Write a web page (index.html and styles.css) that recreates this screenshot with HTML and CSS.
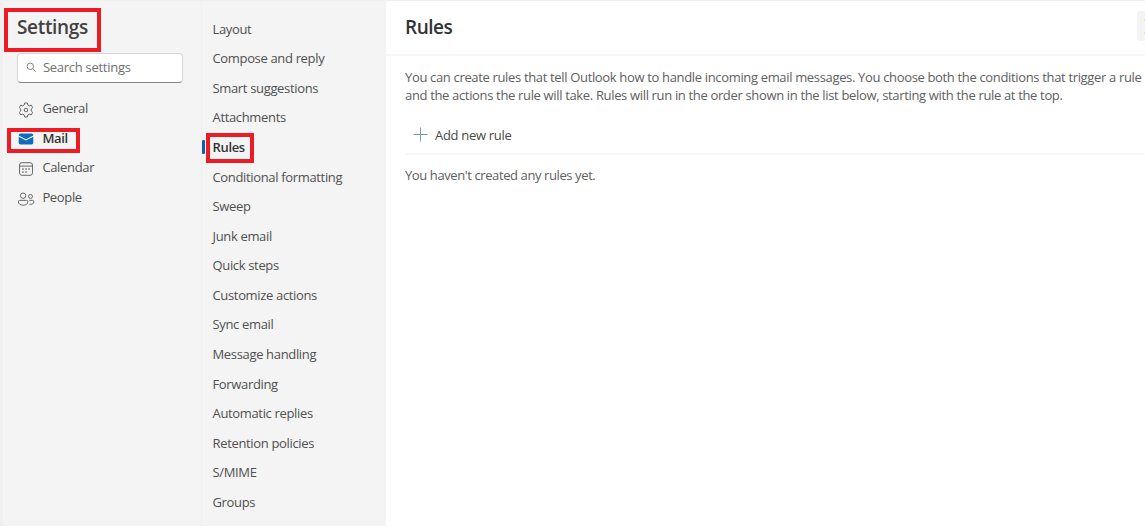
FILE: index.html
```html
<!DOCTYPE html>
<html lang="en">
<head>
<meta charset="utf-8">
<title>Settings</title>
<link rel="stylesheet" href="styles.css">
</head>
<body>
<div class="app">
  <aside class="sidebar">
    <h1 class="title marked">Settings</h1>
    <div class="search">
      <svg class="search-icon" viewBox="0 0 12 12"><circle cx="4.7" cy="4.7" r="3.5"/><path d="M7.3 7.3 10.7 10.7"/></svg>
      <span>Search settings</span>
    </div>
    <nav class="categories">
      <a class="category"><svg class="icon gear" viewBox="0 0 20 20"><path d="M8.500 2.200h3l.5 2.300 1.600.9 2.200-.8 1.700 2.800-1.700 1.500v2.200l1.700 1.500-1.700 2.800-2.200-.8-1.600.9-.5 2.300h-3L8 15.500l-1.600-.9-2.200.8-1.700-2.800 1.700-1.500V8.900L2.500 7.400l1.700-2.800 2.200.8L8 4.500z"/><circle cx="10" cy="10" r="2"/></svg><span>General</span></a>
      <a class="category active"><svg class="icon mail" viewBox="0 0 20 20"><path d="M1.900 6.200V5.800a2 2 0 0 1 2-2h12.200a2 2 0 0 1 2 2v.4L10 10.300z"/><path d="M1.900 7.600 10 11.700l8.100-4.100V14.200a2 2 0 0 1-2 2H3.900a2 2 0 0 1-2-2z"/></svg><span>Mail</span></a>
      <a class="category"><svg class="icon" viewBox="0 0 20 20"><rect x="2.800" y="3" width="14.400" height="14" rx="2.600"/><path d="M3 6.800h14"/><path class="dots" d="M9.200 10h1.600M12.600 10h1.600M5.800 10h1.600M5.800 13.300h1.600M9.200 13.300h1.600"/></svg><span>Calendar</span></a>
      <a class="category"><svg class="icon" viewBox="0 0 20 20"><circle cx="6.800" cy="6.300" r="3"/><circle cx="15" cy="7.200" r="2.200"/><path d="M3 11.500h7.600a1.500 1.500 0 0 1 1.500 1.500c0 2.400-2.200 3.900-5.300 3.900S1.500 15.400 1.500 13A1.500 1.500 0 0 1 3 11.500zM13.600 11.500h3.600a1.500 1.500 0 0 1 1.500 1.500c0 2-1.500 3.200-4.900 2.900"/></svg><span>People</span></a>
    </nav>
    <div class="mail-mark"></div>
  </aside>
  <nav class="sections">
    <a>Layout</a>
    <a>Compose and reply</a>
    <a>Smart suggestions</a>
    <a>Attachments</a>
    <a class="current">Rules</a>
    <a>Conditional formatting</a>
    <a>Sweep</a>
    <a>Junk email</a>
    <a>Quick steps</a>
    <a>Customize actions</a>
    <a>Sync email</a>
    <a>Message handling</a>
    <a>Forwarding</a>
    <a>Automatic replies</a>
    <a>Retention policies</a>
    <a>S/MIME</a>
    <a>Groups</a>
  </nav>
  <main class="content">
    <header class="content-head"><h2>Rules</h2><span class="edge-button"><i></i><i></i></span></header>
    <div class="content-body">
      <p class="intro"><span class="line-one">You can create rules that tell Outlook how to handle incoming email messages. You choose both the conditions that trigger a rule</span><br><span class="line-two">and the actions the rule will take. Rules will run in the order shown in the list below, starting with the rule at the top.</span></p>
      <div class="add"><svg class="plus" viewBox="0 0 16 16"><path class="plus-h" d="M.5 8h15"/><path class="plus-v" d="M8 .5v15"/></svg><span>Add new rule</span></div>
      <p class="empty">You haven't created any rules yet.</p>
    </div>
  </main>
</div>
</body>
</html>
```
FILE: styles.css
```css
*, *::before, *::after { box-sizing: border-box; }
body {
  margin: 0;
  background: #fff;
  color: #505050;
  font: 13px/18px "Open Sans", "Noto Sans", sans-serif;
  letter-spacing: -0.34px;
  overflow: hidden;
}
h1, h2, p { margin: 0; }
.app {
  display: flex;
  height: 526px;
  border-top: 1px solid #efefef;
  background: #f4f4f4;
}
.sidebar {
  position: relative;
  width: 202px;
  flex: none;
  border-left: 3px solid #f0f0f0;
  border-right: 1px solid #f0f0f0;
}
.title {
  width: 97px;
  height: 44px;
  margin: 7px 0 0 1px;
  padding: 3px 0 0 9px;
  border: 4px solid #ec1c24;
  color: #414141;
  font-size: 19px;
  line-height: 24px;
  font-weight: 600;
}
.search {
  display: flex;
  align-items: center;
  gap: 6px;
  width: 166px;
  height: 30px;
  margin: 1px 0 0 14px;
  padding: 0 0 1px 8px;
  border: 1px solid #d6d6d6;
  border-bottom: 1px solid #858585;
  border-radius: 4px;
  background: #fff;
  color: #707070;
  letter-spacing: -0.28px;
}
.search span { line-height: 16px; padding-bottom: 2px; }
.search-icon {
  width: 11px;
  height: 11px;
  fill: none;
  stroke: #777;
}
.categories { padding: 10.4px 0 0 14px; }
.category {
  display: flex;
  align-items: center;
  gap: 7.400px;
  height: 29.6px;
}
.icon {
  width: 18px;
  height: 18px;
  position: relative;
  top: 2px;
  fill: none;
  stroke: #666;
  stroke-width: 1.1;
}
.icon.gear { stroke-linejoin: round; }
.icon.mail { top: 1px; fill: #0f6cbd; stroke: none; }
.icon .dots { stroke-width: 1.6; }
.active, .current { color: #333; font-weight: 600; }
.mail-mark {
  position: absolute;
  left: 4px;
  top: 127px;
  width: 73px;
  height: 25px;
  border: 4px solid #ec1c24;
}
.sections {
  width: 184px;
  flex: none;
  padding: 13px 0 0 10.5px;
}
.sections a {
  display: flex;
  align-items: center;
  height: 29.57px;
}
.sections .current { position: relative; }
.current::before {
  content: "";
  position: absolute;
  left: -10.5px;
  top: 8px;
  width: 3px;
  height: 14px;
  border-radius: 1px;
  background: #0f5fb0;
}
.current::after {
  content: "";
  position: absolute;
  left: -6.5px;
  top: 1px;
  width: 48px;
  height: 30px;
  border: 4px solid #ec1c24;
}
.content { flex: 1; min-width: 0; background: #fff; }
.content-head {
  display: flex;
  justify-content: space-between;
  height: 55px;
  padding: 10px 0 0 19px;
  border-bottom: 2px solid #f6f6f6;
}
.content h2 {
  color: #333;
  font-size: 19px;
  line-height: 33px;
  font-weight: 600;
  letter-spacing: -0.5px;
}
.edge-button {
  display: flex;
  flex-direction: column;
  justify-content: center;
  align-items: flex-end;
  gap: 11px;
  width: 8px;
  height: 30px;
  border-radius: 3px 0 0 3px;
  background: #f4f4f4;
}
.edge-button i { width: 1px; height: 2px; background: #dfe3ad; }
.content-body { padding: 13px 0 0 19px; white-space: nowrap; color: #606060; }
.intro { line-height: 17.6px; }
.add {
  display: flex;
  align-items: center;
  gap: 7px;
  height: 39px;
  margin-top: 11.8px;
  padding: 1px 0 0 8px;
  border-bottom: 2px solid #f7f7f7;
  color: #484848;
  letter-spacing: -0.3px;
}
.plus { width: 15px; height: 15px; fill: none; }
.plus-h { stroke: #7188ac; }
.plus-v { stroke: #6aa0cc; }
.empty { padding-top: 11px; letter-spacing: -0.4px; }
```
